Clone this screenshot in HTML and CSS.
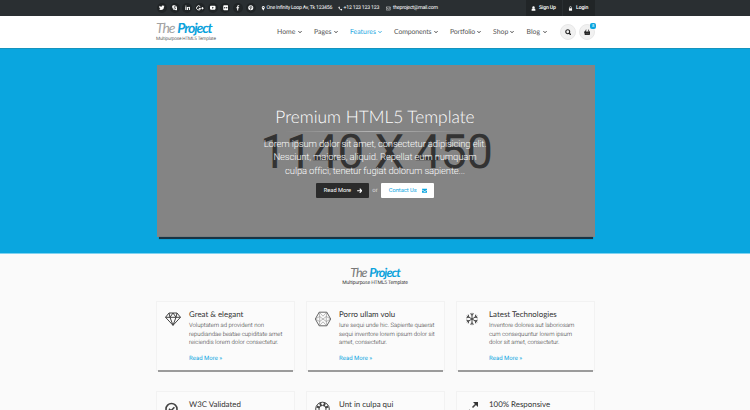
FILE: index.html
```html
<!DOCTYPE html>
<html lang="en">
<head>
<meta charset="utf-8">
<title>The Project</title>
<link rel="stylesheet" href="styles.css">
</head>
<body>
<svg class="defs" width="0" height="0">
  <symbol id="chev" viewBox="0 0 6 6"><path d="M1.500 2.200 3 3.700 4.500 2.200" fill="none" stroke="currentColor" stroke-width="1"/></symbol>
  <symbol id="user" viewBox="0 0 8 8"><circle cx="4" cy="2.3" r="1.9"/><path d="M1 7.5V5.8Q1 4 2.5 4h3Q7 4 7 5.8v1.7z"/></symbol>
  <symbol id="lock" viewBox="0 0 8 8"><path d="M1.5 3.7h5v3.8h-5z"/><path d="M2.5 4V2.4a1.5 1.5 0 0 1 3 0V4" fill="none" stroke="currentColor"/></symbol>
</svg>
<div class="topbar">
  <div class="container">
    <div class="social">
      <a><svg viewBox="0 0 10 10"><path d="M0 8.1q2 .1 3-.8-1.500-.2-2-1.500h.9Q.3 5.200.3 3.700l.9.200Q0 2.700.8 1.300 2.400 3.200 4.900 3.300 4.500 1 6.800.9q.9 0 1.500.6L9.600 1l-.8 1.200L10 2l-1 1.100Q8.900 9 3.300 9.100 1.300 9.100 0 8.100z"/></svg></a>
      <a><svg viewBox="0 0 10 10"><circle cx="3" cy="3" r="2.700"/><circle cx="7" cy="7" r="2.700"/><circle cx="5" cy="5" r="4"/><path d="M7 3.300Q5 2.100 3.700 3.200 3 4.400 5 4.900q2.400.6 1.300 1.900Q4.800 7.800 3 6.600" class="cut"/></svg></a>
      <a><svg viewBox="0 0 10 10"><path d="M.6 3.600h2V9h-2zM3.700 3.600h1.900v.8Q6.200 3.400 7.500 3.400 9.500 3.500 9.500 6v3h-2V6.300q0-1.200-.9-1.200-1 0-1 1.200V9H3.700z"/><circle cx="1.600" cy="1.900" r="1.100"/></svg></a>
      <a><svg class="gplus" viewBox="0 0 12 10"><path d="M6.400 2.500A3.200 3.200 0 1 0 7 5.300H4.200M9.800 3.300v3.400M8.100 5h3.400" fill="none" stroke="currentColor" stroke-width="1.500"/></svg></a>
      <a><svg viewBox="0 0 10 10"><path d="M1.500 1.500h7Q10 1.500 10 3v4q0 1.500-1.500 1.500h-7Q0 8.500 0 7V3q0-1.500 1.500-1.500z"/><path d="M4 3.300v3.400L7 5z" class="hole"/></svg></a>
      <a><svg viewBox="0 0 10 10"><rect x=".5" y=".5" width="9" height="9" rx="1.500"/><circle cx="3.200" cy="5" r="1.300" class="hole"/><circle cx="6.800" cy="5" r="1.300" class="hole"/></svg></a>
      <a><svg viewBox="0 0 10 10"><path d="M4 10V5.700H2.500V4H4V2.500Q4 .3 6 .3h1.600V2H6.500q-.7 0-.7.800V4h1.800l-.3 1.700H5.800V10z"/></svg></a>
      <a><svg viewBox="0 0 10 10"><circle cx="5" cy="5" r="4.600"/><path d="M4 9 5.100 4M3.500 5.500Q2.500 2.500 5 2.400q2.400.1 1.900 2.400Q6.200 6.800 4.800 6" class="cut"/></svg></a>
    </div>
    <div class="contact">
      <span class="c1"><svg viewBox="0 0 8 10"><path d="M4 0a3 3 0 0 1 3 3c0 2-2 4-3 6.500C3 7 1 5 1 3a3 3 0 0 1 3-3z"/><circle cx="4" cy="3" r="1.200" class="hole"/></svg><b>One Infinity Loop Av, Tk 123456</b></span>
      <span class="c2"><svg viewBox="0 0 10 10"><path d="M1 1.500 3 .6l1.300 2.500-1.200 1Q4 6 6 7l1-1.200 2.500 1.300-.9 2Q6.500 10 3.500 6.800.2 3.500 1 1.500z"/></svg><b>+12 123 123 123</b></span>
      <span class="c3"><svg viewBox="0 0 10 10"><path d="M.5 1.500h9v7h-9zM.5 3 5 6.300 9.500 3" fill="none" stroke="currentColor"/></svg><b>theproject@mail.com</b></span>
    </div>
    <div class="account">
      <a class="signup"><svg><use href="#user"/></svg><b>Sign Up</b></a>
      <a class="login"><svg><use href="#lock"/></svg><b>Login</b></a>
    </div>
  </div>
</div>
<header class="header">
  <div class="container">
    <div class="brand">
      <div class="logo"><i>The</i> <em>Project</em></div>
      <div class="slogan">Multipurpose HTML5 Template</div>
    </div>
    <nav class="nav">
      <a class="n1"><span>Home</span><svg><use href="#chev"/></svg></a>
      <a class="n2"><span>Pages</span><svg><use href="#chev"/></svg></a>
      <a class="n3 active"><span>Features</span><svg><use href="#chev"/></svg></a>
      <a class="n4"><span>Components</span><svg><use href="#chev"/></svg></a>
      <a class="n5"><span>Portfolio</span><svg><use href="#chev"/></svg></a>
      <a class="n6"><span>Shop</span><svg><use href="#chev"/></svg></a>
      <a class="n7"><span>Blog</span><svg><use href="#chev"/></svg></a>
    </nav>
    <div class="tools">
      <a><svg viewBox="0 0 10 10"><circle cx="4.200" cy="4.200" r="3" fill="none" stroke="currentColor" stroke-width="1.700"/><path d="m6.500 6.500 2.700 2.700" stroke="currentColor" stroke-width="2"/></svg></a>
      <a><svg viewBox="0 0 10 10"><path d="M0 4h10v1.300h-.6L8.800 9.500H1.200L.6 5.300H0zM1.500 4 3 .6l1 .4-1.200 3zM8.500 4 7 .6 6 1l1.200 3z"/><path d="M3.300 6v2.300M5 6v2.300M6.700 6v2.300" class="bars"/></svg><small>8</small></a>
    </div>
  </div>
</header>
<section class="hero">
  <div class="slide">
    <div class="size">1140 X 450</div>
    <div class="caption">
      <h1>Premium HTML5 Template</h1>
      <hr>
      <p>Lorem ipsum dolor sit amet, consectetur adipisicing elit.<br>Nesciunt, maiores, aliquid. Repellat eum numquam<br>culpa offici, tenetur fugiat dolorum sapiente...</p>
      <div class="buttons">
        <a class="btn dark"><b>Read More</b><svg viewBox="0 0 10 10"><path d="M.3 5h8M5 1.300 8.500 5 5 8.700" fill="none" stroke="currentColor" stroke-width="2.100"/></svg></a>
        <span>or</span>
        <a class="btn light"><b>Contact Us</b><svg viewBox="0 0 10 10"><path d="M0 1.500h10v1.200L5 6 0 2.700zM0 4l5 3.200L10 4v4.800H0z"/></svg></a>
      </div>
    </div>
  </div>
</section>
<main>
  <div class="mark">
    <div class="logo"><i>The</i> <em>Project</em></div>
    <div class="slogan">Multipurpose HTML5 Template</div>
  </div>
  <div class="cards">
    <article class="card">
      <svg viewBox="0 0 16 16"><path d="M4 2h8L15.500 6.300 8 14.300.5 6.300zM.5 6.300h15M4 2 5 6.300 8 14.300l3-8 1-4.300M5 6.300 8 2l3 4.300"/></svg>
      <div><h2>Great &amp; elegant</h2><p>Voluptatem ad provident non<br>repudiandae beatae cupiditate amet<br>reiciendis lorem dolor consectetur.</p><a>Read More »</a></div>
    </article>
    <article class="card">
      <svg class="thin" viewBox="0 0 16 16"><path class="edge" d="M4.200 1.200h7.600L15.700 8l-3.900 6.800H4.200L.3 8z"/><path d="M4.200 1.200l3.800 4 3.800-4M4.200 14.800l3.800-4 3.800 4M.3 8l4.400-2.500 6.600 5M15.700 8l-4.400-2.500-6.600 5L.3 8M15.700 8l-4.400 2.500M4.200 1.200l.5 4.300v5l-.5 4.300M11.800 1.200l-.5 4.300v5l.5 4.300"/></svg>
      <div><h2>Porro ullam volu</h2><p>Iure sequi unde hic. Sapiente quaerat<br>sequi inventore lorem ipsum dolor sit<br>amet, consectetur.</p><a>Read More »</a></div>
    </article>
    <article class="card">
      <svg class="flake" viewBox="0 0 16 16"><path d="M8 1v14M2 4.500l12 7M14 4.500l-12 7M6 1.800l2 1.900 2-1.900M6 14.200l2-1.900 2 1.900M1.500 6.800l2.900-.9-.7-2.900M14.500 9.200l-2.900.9.7 2.900M14.500 6.800l-2.900-.9.700-2.900M1.500 9.200l2.900.9-.7 2.900"/></svg>
      <div><h2>Latest Technologies</h2><p>Inventore dolores aut laboriosam<br>cum consequuntur lorem ipsum<br>dolor sit amet, consectetur.</p><a>Read More »</a></div>
    </article>
    <article class="card">
      <svg class="thick" viewBox="0 0 16 16"><circle cx="6.500" cy="8" r="5.500"/><path d="m4 7.800 2 2 3.400-3.600"/></svg>
      <div><h2>W3C Validated</h2></div>
    </article>
    <article class="card">
      <svg viewBox="0 0 16 16"><circle cx="7.500" cy="8" r="6.800"/><circle cx="7.500" cy="8" r="3.600"/><path class="wide" d="M5 2.200 6.200 4.800M10 2.200 8.800 4.800M1.800 5.500l2.700 1.200M13.200 5.500l-2.700 1.200"/></svg>
      <div><h2>Unt in culpa qui</h2></div>
    </article>
    <article class="card">
      <svg viewBox="0 0 16 16"><path d="m7.500 6.500 4-4M1 13l4-4" stroke-width="1.600"/><path class="solid" d="M8 1h5v5zM0 9.500v5h5z"/></svg>
      <div><h2>100% Responsive</h2></div>
    </article>
  </div>
</main>
</body>
</html>
```

FILE: styles.css
```css
* { box-sizing: border-box; }
body { margin: 0; height: 410px; overflow: hidden; background: #fafafa; color: #444; font: 6px/8px Roboto, sans-serif; text-rendering: geometricPrecision; }
svg { display: block; flex: none; fill: currentColor; }
.defs { position: absolute; }
b { font-weight: 400; white-space: nowrap; }
.container { width: 439px; margin-left: 156px; display: flex; }

.topbar { height: 16px; background: #2a2f32; color: #fff; }
.topbar .container { height: 16px; align-items: center; }
.social { display: flex; gap: 2.700px; width: 105px; padding-left: 1px; }
.social a { width: 10px; height: 10px; border-radius: 50%; background: #202426; display: flex; align-items: center; justify-content: center; flex: none; }
.social svg { width: 5.500px; height: 5.500px; }
.social .gplus { width: 8px; height: 6.500px; }
.cut { fill: none; stroke: #202426; stroke-width: 1.100; }
.hole { fill: #202426; }
.contact { display: flex; width: 265px; font-size: 5.200px; letter-spacing: -.22px; }
.contact span { display: flex; align-items: center; gap: 1px; flex: none; }
.contact svg { width: 4.500px; height: 5px; }
.c1 { width: 77px; }
.c2 { width: 48px; }
.contact .c3 { gap: 2.500px; letter-spacing: -.25px; }
.account { display: flex; height: 16px; font-size: 5.200px; }
.account b { font-weight: 500; letter-spacing: -.15px; }
.account a { display: flex; align-items: center; gap: 3px; background: #212527; padding-left: 5px; }
.account svg { width: 5px; height: 5px; }
.signup { width: 37px; border-right: 1px solid #2a2f32; }
.login { width: 32px; }

.header { height: 33px; background: #fff; border-bottom: 1px solid #1593bd; }
.brand { width: 121px; padding-top: 3px; }
.logo { font: italic 700 14px/17px Lato, sans-serif; white-space: nowrap; letter-spacing: -1.100px; word-spacing: 1px; }
.logo i { color: #a3a3a3; font-weight: 400; }
.logo em { color: #0ba2dc; }
.slogan { font-size: 4.700px; line-height: 7px; letter-spacing: -.18px; white-space: nowrap; color: #666; }
.nav { display: flex; height: 32px; align-items: center; font: 6.900px/9px Lato, sans-serif; color: #555; }
.nav a { display: flex; align-items: center; justify-content: space-between; margin-right: 11.500px; }
.nav svg { width: 6px; height: 6px; color: #333; }
.nav .active, .nav .active svg { color: #28a8df; }
.n1 { width: 25.500px; } .n2 { width: 24.500px; } .n3 { width: 32.500px; } .n4 { width: 44.500px; letter-spacing: -.12px; } .n5 { width: 31.500px; letter-spacing: -.15px; } .n6 { width: 22px; } .n7 { width: 21px; }
.tools { display: flex; gap: 3px; align-items: center; height: 32px; margin-left: auto; }
.tools a { position: relative; width: 16px; height: 16px; border-radius: 50%; background: #f1f1f1; border: 1px solid #e8e8e8; display: flex; align-items: center; justify-content: center; color: #222; }
.tools svg { width: 6.500px; height: 6.500px; }
.bars { fill: none; stroke: #777; stroke-width: .7; }
.tools small { position: absolute; right: -2px; top: -2px; width: 6px; height: 6px; border-radius: 2px; background: #0ba5df; color: #fff; font-size: 4px; line-height: 6px; text-align: center; }

.hero { height: 205px; background: #0aa6df; padding: 16px 155px 0 157px; border-bottom: 1px solid #7fd2f0; }
.slide { position: relative; height: 172px; background: #848484; text-align: center; }
.slide::after { content: ""; position: absolute; left: 2px; right: 2px; top: 172px; height: 2px; background: #173344; box-shadow: 0 0 1px #173344; }
.size { position: absolute; left: 0; right: 0; top: 60px; font: 47.500px/54px Roboto, sans-serif; letter-spacing: -.8px; color: #333; white-space: nowrap; }
.caption { position: relative; left: -1px; padding-top: 40px; color: #fff; }
h1 { margin: 0; font: 300 17.300px/24px Lato, sans-serif; white-space: nowrap; }
hr { width: 180px; height: 1px; margin: 1.500px auto 6px; border: 0; background: linear-gradient(90deg, #848484, #b5b5b5, #848484); }
.caption p { margin: 0; font: 300 9.500px/13.500px Roboto, sans-serif; letter-spacing: -.16px; white-space: nowrap; color: #f8f8f8; }
.buttons { display: flex; justify-content: center; align-items: center; margin-top: 5px; gap: 3px; color: #ddd; }
.btn { display: flex; align-items: center; justify-content: space-between; height: 15px; width: 53.500px; padding: 0 7px 0 8px; border-radius: 1px; font-size: 5.700px; }
.btn svg { width: 5.500px; height: 5.500px; }
.dark { background: #2b2b2b; color: #fff; }
.light { background: #fff; color: #0ba5df; }

main { height: 156px; overflow: hidden; }
.mark { text-align: center; padding-top: 10px; height: 47px; }
.mark .logo { font-size: 12.500px; letter-spacing: -1px; }
.mark .logo i { color: #777; }
.mark .slogan { color: #444; font-size: 5.100px; letter-spacing: -.17px; margin-top: -1px; }
.cards { display: grid; grid-template-columns: repeat(3, 139px); grid-auto-rows: 70px; column-gap: 11px; row-gap: 20px; margin-left: 156px; }
.card { position: relative; display: flex; padding: 8px 0 0 8px; gap: 8px; border: 1px solid #f2f2f2; background: #fbfbfb; }
.card::after { content: ""; position: absolute; left: 1px; right: 1px; bottom: -2px; height: 2px; background: #9b9b9b; }
.card > svg { width: 16px; height: 16px; margin-top: 1px; fill: none; stroke: #444; stroke-width: 1; }
.card > .thin { stroke: #777; stroke-width: .5; }
.edge { stroke: #555; stroke-width: .9; }
.card > .flake { stroke-width: 1.100; width: 14px; margin-right: 2px; }
.card > .thick { stroke-width: 1.600; }
.wide { stroke-width: 2; }
.solid { fill: #333; stroke: none; }
h2 { margin: 0; font: 7.900px/9px Lato, sans-serif; color: #333; white-space: nowrap; }
.card p { margin: 3px 0 6.500px; font-size: 6px; font-weight: 300; line-height: 8.700px; letter-spacing: -.03px; white-space: nowrap; color: #333; }
.card a { display: block; color: #0ba5df; font-size: 6px; }
```
